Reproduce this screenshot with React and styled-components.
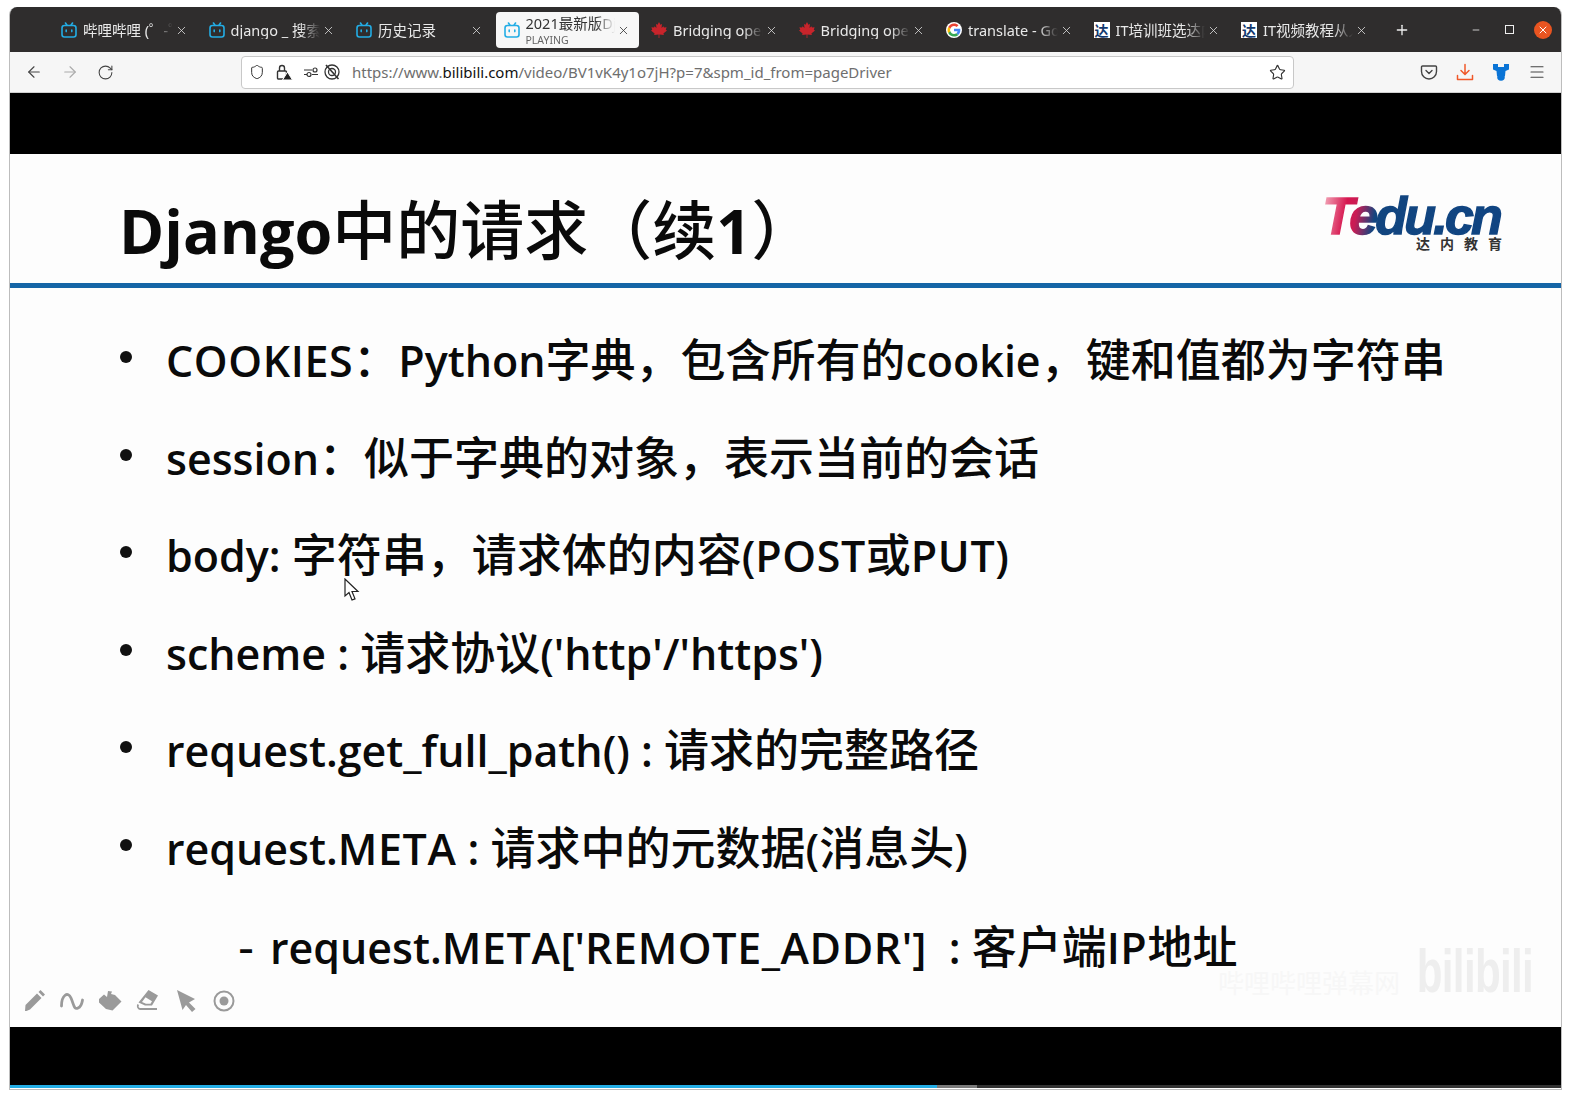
import React from 'react';
import styled, { createGlobalStyle } from 'styled-components';
import { ArrowLeft, ArrowRight, RotateCw, Shield, Star, Menu, Plus, Minus, X } from 'lucide-react';

const GlobalStyle = createGlobalStyle`
  html, body {
    margin: 0;
    background: #fff;
  }
`;

const UI_FONT = `"Noto Sans", "Noto Sans CJK SC", sans-serif`;
const SLIDE_FONT = `"Noto Sans CJK SC", sans-serif`;

const Page = styled.div`
  width: 1571px;
  height: 1098px;
  padding: 7px 9px 0 9px;
  box-sizing: border-box;
`;

const Window = styled.div`
  width: 1553px;
  height: 1083px;
  box-sizing: border-box;
  border: 1px solid #bdbdbd;
  border-top: 0;
  border-radius: 8px 8px 0 0;
  overflow: hidden;
  display: flex;
  flex-direction: column;
  font-family: ${UI_FONT};
`;

const TabBar = styled.div`
  height: 45px;
  flex: none;
  background: #2f2d2d;
  display: flex;
  align-items: center;
  padding-left: 39px;
  color: #e9e9e9;
`;

const TabSlot = styled.div`
  width: 147.5px;
  height: 36px;
  flex: none;
  box-sizing: border-box;
  margin-top: 1px;
  padding-left: ${(p) => (p.$active ? '4px' : '0')};
`;

const TabInner = styled.div`
  height: 100%;
  display: flex;
  align-items: center;
  gap: 6px;
  padding: 0 9px 0 ${(p) => (p.$active ? '8px' : '12px')};
  border-radius: 4px;
  background: ${(p) => (p.$active ? '#f7f7f7' : 'transparent')};
  color: ${(p) => (p.$active ? '#333' : '#e9e9e9')};
`;

const TabText = styled.div`
  flex: 1;
  min-width: 0;
  margin-right: -4px;
  overflow: hidden;
  white-space: nowrap;
  font-size: 14.5px;
  line-height: 17px;
  -webkit-mask-image: linear-gradient(to right, #000 78%, transparent 100%);
  mask-image: linear-gradient(to right, #000 78%, transparent 100%);
`;

const PlayingLabel = styled.div`
  font-size: 10.5px;
  line-height: 12px;
  margin-top: 2px;
  color: #666;
`;

const Favicon = styled.span`
  width: 16px;
  height: 16px;
  flex: none;
  display: flex;
  align-items: center;
  justify-content: center;
`;

const TeduFavicon = styled(Favicon)`
  background: #fff;
  color: #12386e;
  font: 700 14px/16px "Noto Sans CJK SC", sans-serif;
`;

const TabClose = styled(X)`
  flex: none;
  color: ${(p) => (p.$active ? '#333' : '#ddd')};
`;

const NewTab = styled.div`
  margin-left: 17px;
  display: flex;
  color: #eee;
`;

const WindowControls = styled.div`
  margin-left: auto;
  padding-right: 9px;
  display: flex;
  align-items: center;
  gap: 20px;
`;

const MinimizeIcon = styled(Minus)`
  margin-right: 4px;
`;

const MaxBox = styled.span`
  width: 7px;
  height: 7px;
  border: 1px solid #eee;
`;

const CloseCircle = styled.span`
  width: 18px;
  height: 18px;
  border-radius: 50%;
  background: #e95420;
  display: flex;
  align-items: center;
  justify-content: center;
  color: #fff;
`;

const NavBar = styled.div`
  height: 41px;
  flex: none;
  box-sizing: border-box;
  background: #f6f6f6;
  border-bottom: 1px solid #cfcfcf;
  display: flex;
  align-items: center;
  color: #444;
`;

const NavButtons = styled.div`
  width: 231px;
  flex: none;
  padding-left: 15px;
  box-sizing: border-box;
  display: flex;
  align-items: center;
  gap: 18px;
`;

const UrlBar = styled.div`
  width: 1053px;
  height: 33px;
  flex: none;
  box-sizing: border-box;
  background: #fff;
  border: 1px solid #c8c8c8;
  border-radius: 4px;
  display: flex;
  align-items: center;
  padding: 0 7px;
  color: #333;
`;

const UrlIcons = styled.div`
  width: 103px;
  flex: none;
  display: flex;
  align-items: center;
  gap: 10px;
`;

const PermissionGroup = styled.div`
  display: flex;
  align-items: center;
  gap: 4px;
`;

const UrlText = styled.div`
  flex: 1;
  font-size: 15px;
  color: #6e6e6e;
  white-space: nowrap;
`;

const UrlHost = styled.span`
  color: #111;
`;

const NavTools = styled.div`
  margin-left: auto;
  padding-right: 15px;
  display: flex;
  align-items: center;
  gap: 18px;
`;

const LetterBox = styled.div`
  background: #000;
  flex: none;
  height: ${(p) => p.$h}px;
`;

const Slide = styled.div`
  position: relative;
  height: 873px;
  flex: none;
  background: #fdfdfd;
  font-family: ${SLIDE_FONT};
  color: #0a0a0a;
  font-weight: 500;
`;

const SlideHeader = styled.header`
  height: 129px;
  box-sizing: border-box;
  padding: 38px 58px 0 109px;
  display: flex;
  justify-content: space-between;
  align-items: flex-start;
`;

const Title = styled.h1`
  margin: 0;
  font-size: 64px;
  line-height: 68px;
  font-weight: 500;

  span {
    font-weight: 700;
  }
`;

const Latin = styled.span`
  font-family: "Open Sans", sans-serif;
  font-size: 0.955em;
  font-weight: 600;
`;

const Caps = styled.span`
  letter-spacing: 0.6px;
`;

const Logo = styled.div`
  width: 184px;
  margin-top: 3px;
  display: flex;
  flex-direction: column;
  align-items: flex-end;
  font-family: "Liberation Sans", sans-serif;
`;

const LogoMark = styled.div`
  font-size: 52px;
  line-height: 42px;
  font-weight: 700;
  font-style: italic;
  letter-spacing: -2.8px;
  padding-right: 3px;
  background: linear-gradient(100deg, #f6b6c4 0%, #d6164f 14%, #c81d55 20%, #12457f 30%, #0f4482 100%);
  -webkit-background-clip: text;
  background-clip: text;
  color: transparent;
  -webkit-text-stroke: 1.4px transparent;
`;

const LogoSub = styled.div`
  font: 700 14px/16px "Noto Sans CJK SC", sans-serif;
  letter-spacing: 10px;
  margin: -2px -9px 0 0;
  color: #333;
`;

const Rule = styled.div`
  height: 5px;
  background: #1565a6;
`;

const BulletList = styled.ul`
  list-style: none;
  margin: 0;
  padding: 21px 0 0 110px;
`;

const BulletRow = styled.li`
  height: 97.5px;
  box-sizing: content-box;
  display: flex;
  align-items: center;
  font-size: 45px;
  white-space: pre;
  padding: ${(p) => (p.$sub ? '2px 0 0 118px' : '0')};
`;

const Dot = styled.span`
  width: 12px;
  height: 12px;
  flex: none;
  margin: 0 34px 1px 0;
  border-radius: 50%;
  background: #111;
`;

const Dash = styled.span`
  width: 32px;
  flex: none;
`;

const PenTools = styled.div`
  position: absolute;
  left: 12px;
  bottom: 14px;
  display: flex;
  gap: 14px;
  color: #9a9a9a;
`;

const Cursor = styled.svg`
  position: absolute;
  left: 334px;
  top: 424px;
`;

const Watermark = styled.div`
  position: absolute;
  right: 28px;
  bottom: 30px;
  display: flex;
  align-items: flex-end;
  gap: 14px;
  font-family: "Liberation Sans", sans-serif;
`;

const WatermarkText = styled.span`
  font: 400 26px/30px "Noto Sans CJK SC", sans-serif;
  color: #f7f7f7;
`;

const WatermarkLogo = styled.span`
  display: inline-block;
  font-size: 62px;
  line-height: 52px;
  font-weight: 700;
  letter-spacing: -1px;
  color: #eeeeee;
  margin-left: -52px;
  transform: scaleX(0.68);
  transform-origin: right center;
`;

const Progress = styled.div`
  height: 3px;
  flex: none;
  display: flex;
  background: #333;
`;

const Played = styled.div`
  width: 927px;
  background: #23ade5;
`;

const Buffered = styled.div`
  width: 40px;
  background: #7a7a7a;
`;

const BiliIcon = () => (
  <svg width="16" height="16" viewBox="0 0 16 16" fill="none" stroke="#23ade5" strokeWidth="1.6" strokeLinecap="round">
    <rect x="1" y="3.5" width="14" height="11.5" rx="2.4" />
    <path d="M4.5 1 6 3.2M11.5 1 10 3.2" />
    <path d="M5.2 8v1.6M10.8 8v1.6" />
  </svg>
);

const MapleIcon = () => (
  <svg width="16" height="16" viewBox="0 0 16 16" fill="#c8242b">
    <path d="M8 0 9.4 2.8 11 2 10.5 6 12.4 4.2 13 5.6 15.6 5.2 14.8 7.8 16 8.6 12.4 11.6 12.9 13 8.4 12.5V16H7.6V12.5L3.1 13 3.6 11.6 0 8.6 1.2 7.8.4 5.2 3 5.6 3.6 4.2 5.5 6 5 2 6.6 2.8Z" />
  </svg>
);

const GoogleIcon = () => (
  <svg width="16" height="16" viewBox="0 0 48 48">
    <circle cx="24" cy="24" r="24" fill="#fff" />
    <path fill="#EA4335" d="M24 12c3.1 0 5.8 1.1 8 3l5.5-5.5C34 6.3 29.300 4.500 24 4.500c-7.600 0-14.200 4.400-17.400 10.800l6.400 5C14.600 15.500 18.900 12 24 12z" />
    <path fill="#4285F4" d="M43 24.500c0-1.400-.1-2.700-.4-4H24v7.600h10.700c-.5 2.500-1.900 4.600-4 6l6.200 4.800C40.600 35.500 43 30.500 43 24.500z" />
    <path fill="#FBBC05" d="M13 28.200c-.5-1.300-.7-2.700-.7-4.200s.3-2.900.7-4.200l-6.400-5C5.300 17.400 4.500 20.600 4.500 24s.8 6.600 2.100 9.200l6.400-5z" />
    <path fill="#34A853" d="M24 43.500c5.300 0 9.700-1.700 12.900-4.700l-6.200-4.800c-1.700 1.200-4 1.900-6.700 1.900-5.100 0-9.400-3.400-11-8.100l-6.400 5C9.800 39.100 16.400 43.500 24 43.500z" />
  </svg>
);

const LockWarnIcon = () => (
  <svg width="18" height="18" viewBox="0 0 18 18" fill="none" stroke="#333" strokeWidth="1.4">
    <rect x="2.500" y="8" width="9" height="8" rx="1" />
    <path d="M4.500 8V5a2.500 2.500 0 0 1 5 0v3" />
    <path d="M12.500 9 17.500 17H7.500Z" fill="#222" stroke="#fff" strokeWidth="1" />
  </svg>
);

const PermissionIcon = () => (
  <svg width="16" height="16" viewBox="0 0 16 16" fill="none" stroke="#333" strokeWidth="1.2">
    <path d="M1 6h8M1 10.500h3M9 10.500h6" />
    <circle cx="12" cy="6" r="2" />
    <circle cx="6" cy="10.500" r="2" />
  </svg>
);

const TrackingIcon = () => (
  <svg width="18" height="18" viewBox="0 0 18 18" fill="none" stroke="#333" strokeWidth="1.300">
    <circle cx="9" cy="9" r="7" />
    <circle cx="9" cy="9" r="3.500" />
    <path d="M3 2 15.500 16" strokeWidth="1.600" />
  </svg>
);

const PocketIcon = () => (
  <svg width="18" height="18" viewBox="0 0 18 18" fill="none" stroke="#444" strokeWidth="1.400" strokeLinecap="round" strokeLinejoin="round">
    <path d="M2.500 3h13a1 1 0 0 1 1 1v4.500a7.500 7.500 0 0 1-15 0V4a1 1 0 0 1 1-1z" />
    <path d="M6 7.500 9 10.500 12 7.500" />
  </svg>
);

const DownloadIcon = () => (
  <svg width="18" height="18" viewBox="0 0 18 18" fill="none" stroke="#f0582a" strokeWidth="1.500" strokeLinecap="round" strokeLinejoin="round">
    <path d="M9 1.500V11M5 7.500 9 11.500 13 7.500" />
    <path d="M1.500 12.500v4h15v-4" />
  </svg>
);

const ExtensionIcon = () => (
  <svg width="18" height="18" viewBox="0 0 18 18" fill="#0a74d6">
    <path d="M1 1h5v3h6V1h5v5.500l-3.500 1.500L13 13H5L4.500 8 1 6.500Z" />
    <circle cx="9" cy="14" r="3.800" />
  </svg>
);

const PencilTool = () => (
  <svg width="24" height="24" viewBox="0 0 24 24" fill="currentColor">
    <path d="M3 22 3.500 16 15 4.500 19.500 9 8 20.500 4.500 22Z" />
    <path d="M16.500 3 18.500 1 23 5.500 21 7.500Z" />
  </svg>
);

const CurveTool = () => (
  <svg width="24" height="24" viewBox="0 0 24 24" fill="none" stroke="currentColor" strokeWidth="2.800" strokeLinecap="round">
    <path d="M1.500 17C1.500 6 8 2 11 9s3 12 7 10 4-6 4.500-8" />
  </svg>
);

const FillTool = () => (
  <svg width="24" height="24" viewBox="0 0 24 24" fill="currentColor">
    <path d="M10 2 14 2.500 13 5 17 6 23.500 12.500 14.500 21.500 8 20 1 13.500 1 10 6 5.500 9 8Z" />
  </svg>
);

const EraserTool = () => (
  <svg width="24" height="24" viewBox="0 0 24 24" fill="currentColor">
    <path d="M12.500 1 22 6.500 16 16.500H9L2.500 13.500Zm-6.500 12 4 1.800h4.500l1.500-2.500-6.500-4Z" fillRule="evenodd" />
    <path d="M4 19h17v2H4a4 4 0 0 1-2.500-6l1.500 1c-.8 1.200-.3 3 1 3z" />
  </svg>
);

const PointerTool = () => (
  <svg width="24" height="24" viewBox="0 0 24 24" fill="currentColor">
    <path d="M3 1 21 10 15 13.500 21.500 20 18 23 12 16 8.500 21Z" />
  </svg>
);

const RecordTool = () => (
  <svg width="24" height="24" viewBox="0 0 24 24" fill="none" stroke="currentColor">
    <circle cx="12" cy="12" r="9.500" strokeWidth="2" />
    <circle cx="12" cy="12" r="4.500" fill="currentColor" stroke="none" />
  </svg>
);

// slide text mixes sizes: latin runs are a little smaller than CJK, capitals sit wider
const Mixed = ({ text }) =>
  text.split(/([\u4e00-\u9fff，：（）]+)/).map((part, i) =>
    i % 2 ? part : part && (
      <Latin key={i}>
        {part.split(/([A-Z_]{2,})/).map((run, j) => (j % 2 ? <Caps key={j}>{run}</Caps> : run))}
      </Latin>
    )
  );

const tabs = [
  { label: '哔哩哔哩 (゜-゜)つロ 干杯', icon: <BiliIcon /> },
  { label: 'django _ 搜索结果', icon: <BiliIcon /> },
  { label: '历史记录', icon: <BiliIcon /> },
  { label: '2021最新版Django', icon: <BiliIcon />, active: true },
  { label: 'Bridging open', icon: <MapleIcon /> },
  { label: 'Bridging open', icon: <MapleIcon /> },
  { label: 'translate - Google', icon: <GoogleIcon /> },
  { label: 'IT培训班选达内', icon: <TeduFavicon>达</TeduFavicon> },
  { label: 'IT视频教程从入门', icon: <TeduFavicon>达</TeduFavicon> },
];

const bullets = [
  'COOKIES：Python字典，包含所有的cookie，键和值都为字符串',
  'session：似于字典的对象，表示当前的会话',
  'body: 字符串，请求体的内容(POST或PUT)',
  "scheme : 请求协议('http'/'https')",
  'request.get_full_path() : 请求的完整路径',
  'request.META : 请求中的元数据(消息头)',
];

export default function App() {
  return (
    <Page>
      <GlobalStyle />
      <Window>
        <TabBar>
          {tabs.map((tab, i) => (
            <TabSlot key={i} $active={tab.active}>
              <TabInner $active={tab.active}>
                {tab.icon}
                <TabText>
                  {tab.label}
                  {tab.active && <PlayingLabel>PLAYING</PlayingLabel>}
                </TabText>
                <TabClose size={13} strokeWidth={1.5} $active={tab.active} />
              </TabInner>
            </TabSlot>
          ))}
          <NewTab><Plus size={16} /></NewTab>
          <WindowControls>
            <MinimizeIcon size={10} />
            <MaxBox />
            <CloseCircle><X size={12} /></CloseCircle>
          </WindowControls>
        </TabBar>

        <NavBar>
          <NavButtons>
            <ArrowLeft size={18} strokeWidth={1.5} />
            <ArrowRight size={18} strokeWidth={1.5} color="#aaa" />
            <RotateCw size={17} strokeWidth={1.5} />
          </NavButtons>
          <UrlBar>
            <UrlIcons>
              <Shield size={16} strokeWidth={1.5} />
              <LockWarnIcon />
              <PermissionGroup>
                <PermissionIcon />
                <TrackingIcon />
              </PermissionGroup>
            </UrlIcons>
            <UrlText>
              https://www.<UrlHost>bilibili.com</UrlHost>/video/BV1vK4y1o7jH?p=7&amp;spm_id_from=pageDriver
            </UrlText>
            <Star size={17} strokeWidth={1.6} />
          </UrlBar>
          <NavTools>
            <PocketIcon />
            <DownloadIcon />
            <ExtensionIcon />
            <Menu size={18} strokeWidth={1.5} />
          </NavTools>
        </NavBar>

        <LetterBox $h={61} />

        <Slide>
          <SlideHeader>
            <Title><Mixed text="Django中的请求（续1）" /></Title>
            <Logo>
              <LogoMark>Tedu.cn</LogoMark>
              <LogoSub>达内教育</LogoSub>
            </Logo>
          </SlideHeader>
          <Rule />
          <BulletList>
            {bullets.map((text) => (
              <BulletRow key={text}>
                <Dot />
                <span><Mixed text={text} /></span>
              </BulletRow>
            ))}
            <BulletRow $sub>
              <Dash>-</Dash>
              <span><Mixed text={"request.META['REMOTE_ADDR']  : 客户端IP地址"} /></span>
            </BulletRow>
          </BulletList>

          <PenTools>
            <PencilTool />
            <CurveTool />
            <FillTool />
            <EraserTool />
            <PointerTool />
            <RecordTool />
          </PenTools>

          <Cursor width="16" height="24" viewBox="0 0 16 24" fill="#fff" stroke="#222" strokeWidth="1.200">
            <path d="M1 1V18L5 14.500 8 22 11 20.800 8 13.500H14Z" />
          </Cursor>

          <Watermark>
            <WatermarkText>哔哩哔哩弹幕网</WatermarkText>
            <WatermarkLogo>bilibili</WatermarkLogo>
          </Watermark>
        </Slide>

        <LetterBox $h={58} />
        <Progress>
          <Played />
          <Buffered />
        </Progress>
      </Window>
    </Page>
  );
}
